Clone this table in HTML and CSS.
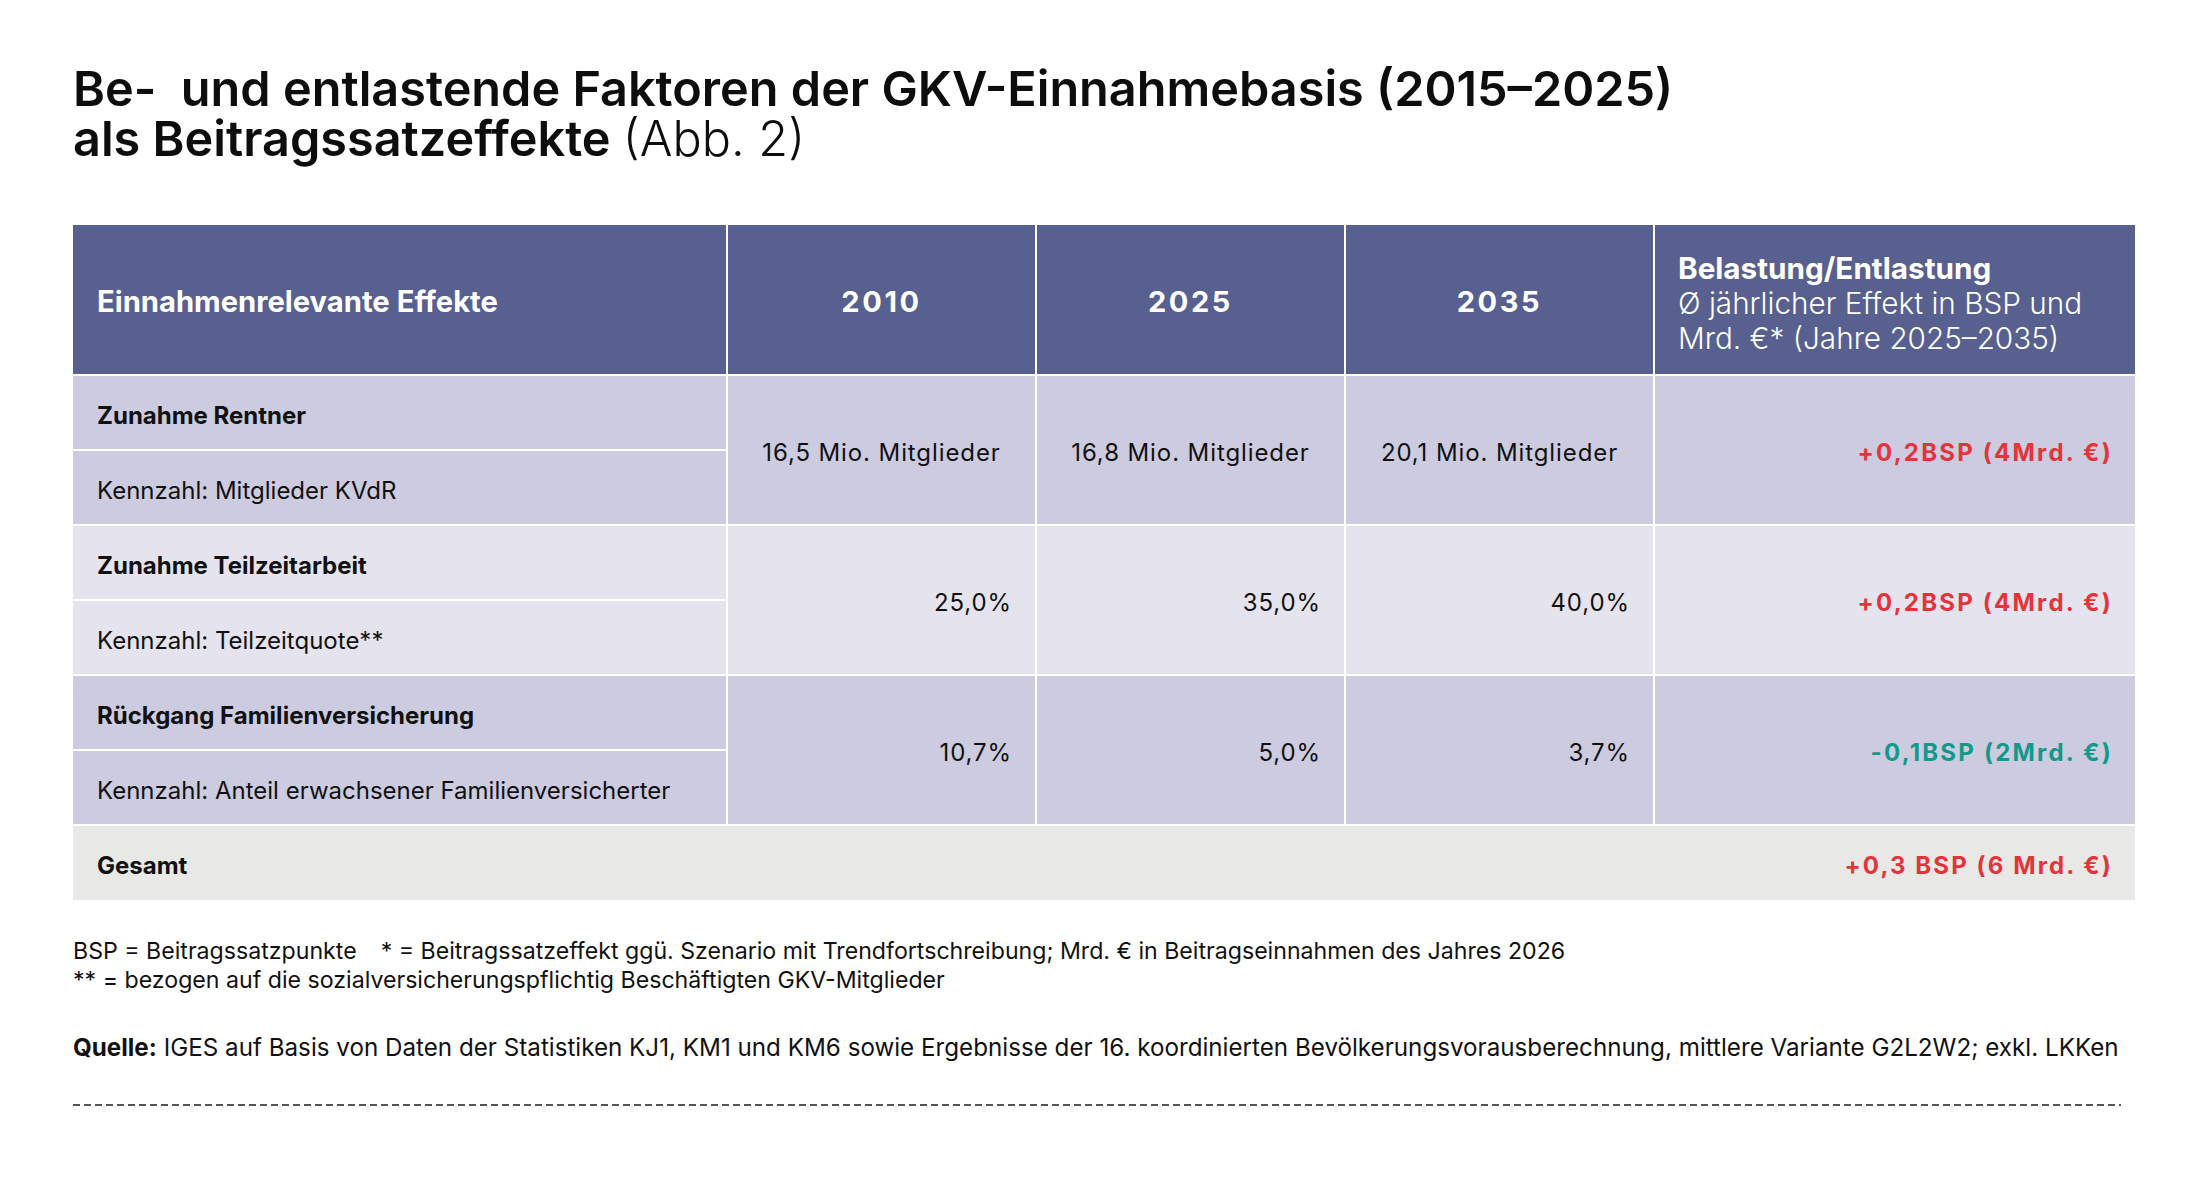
FILE: index.html
```html
<!DOCTYPE html>
<html lang="de">
<head>
<meta charset="utf-8">
<title>Be- und entlastende Faktoren der GKV-Einnahmebasis</title>
<link rel="stylesheet" href="styles.css">
</head>
<body>
<main class="page">
  <h1 class="title">Be-&nbsp; und entlastende Faktoren der GKV-Einnahmebasis (2015–2025)<br>als Beitragssatzeffekte <span class="title-light">(Abb. 2)</span></h1>

  <div class="grid">
    <div class="hd hd-left">Einnahmenrelevante Effekte</div>
    <div class="hd hd-year">2010</div>
    <div class="hd hd-year">2025</div>
    <div class="hd hd-year">2035</div>
    <div class="hd hd-right"><strong>Belastung/Entlastung</strong><span>Ø jährlicher Effekt in BSP und</span><span>Mrd. €* (Jahre 2025–2035)</span></div>

    <div class="cell lbl dark bold">Zunahme Rentner</div>
    <div class="cell val dark center span2">16,5 Mio. Mitglieder</div>
    <div class="cell val dark center span2">16,8 Mio. Mitglieder</div>
    <div class="cell val dark center span2">20,1 Mio. Mitglieder</div>
    <div class="cell eff dark span2 red">+0,2BSP (4Mrd. €)</div>
    <div class="cell lbl dark">Kennzahl: Mitglieder KVdR</div>

    <div class="cell lbl light bold">Zunahme Teilzeitarbeit</div>
    <div class="cell val light span2">25,0%</div>
    <div class="cell val light span2">35,0%</div>
    <div class="cell val light span2">40,0%</div>
    <div class="cell eff light span2 red">+0,2BSP (4Mrd. €)</div>
    <div class="cell lbl light">Kennzahl: Teilzeitquote**</div>

    <div class="cell lbl dark bold">Rückgang Familienversicherung</div>
    <div class="cell val dark span2">10,7%</div>
    <div class="cell val dark span2">5,0%</div>
    <div class="cell val dark span2">3,7%</div>
    <div class="cell eff dark span2 teal">-0,1BSP (2Mrd. €)</div>
    <div class="cell lbl dark">Kennzahl: Anteil erwachsener Familienversicherter</div>

    <div class="total">
      <span class="bold">Gesamt</span>
      <span class="eff-total red">+0,3 BSP (6 Mrd. €)</span>
    </div>
  </div>

  <div class="notes">
    <p>BSP = Beitragssatzpunkte<span class="sep"></span>* = Beitragssatzeffekt ggü. Szenario mit Trendfortschreibung; Mrd. € in Beitragseinnahmen des Jahres 2026<br>** = bezogen auf die sozialversicherungspflichtig Beschäftigten GKV-Mitglieder</p>
    <p class="source"><strong>Quelle:</strong> IGES auf Basis von Daten der Statistiken KJ1, KM1 und KM6 sowie Ergebnisse der 16. koordinierten Bevölkerungsvorausberechnung, mittlere Variante G2L2W2; exkl. LKKen</p>
  </div>
  <div class="dash"></div>
</main>
</body>
</html>
```
FILE: styles.css
```css
html, body {
  margin: 0;
  padding: 0;
  background: #ffffff;
}

body {
  font-family: "Inter", "Liberation Sans", sans-serif;
  color: #111111;
}

.page {
  padding: 64px 62px 0 73px;
}

.title {
  margin: 0;
  font-size: 48.6px;
  line-height: 50px;
  font-weight: 600;
  color: #0d0d0d;
}

.title-light {
  font-weight: 300;
}

.grid {
  margin-top: 61px;
  width: 2062px;
  display: grid;
  grid-template-columns: 653px 307px 307px 307px 480px;
  grid-template-rows: 149px 73px 73px 73px 73px 73px 73px 74px;
  gap: 2px;
  background: #ffffff;
}

.hd {
  background: #57608f;
  color: #ffffff;
  display: flex;
  align-items: center;
  font-size: 28.5px;
}

.hd-left {
  padding-left: 24px;
  padding-top: 4px;
  font-weight: 700;
  font-size: 29.2px;
}

.hd-year {
  justify-content: center;
  padding-top: 4px;
  font-weight: 700;
  font-size: 29px;
  letter-spacing: 2.6px;
}

.hd-right {
  padding-left: 23px;
  padding-top: 8px;
  line-height: 35px;
  font-size: 29.7px;
  font-weight: 300;
  flex-direction: column;
  align-items: flex-start;
  justify-content: center;
}

.hd-right strong {
  font-weight: 700;
}

.cell {
  display: flex;
  align-items: center;
  font-size: 24px;
}

.dark {
  background: #cccbe0;
}

.light {
  background: #e4e3ee;
}

.lbl {
  padding-left: 24px;
  padding-top: 6px;
}

.bold {
  font-weight: 700;
}

.span2 {
  grid-row: span 2;
}

.val {
  justify-content: flex-end;
  padding-right: 23px;
  padding-top: 4px;
  letter-spacing: 0.9px;
}

.val.center {
  justify-content: center;
  padding-right: 0;
}

.eff {
  justify-content: flex-end;
  padding-right: 22px;
  padding-top: 4px;
  font-weight: 700;
  letter-spacing: 2.2px;
}

.red {
  color: #e4343a;
}

.teal {
  color: #11998a;
}

.total {
  grid-column: 1 / -1;
  background: #e8e8e7;
  display: flex;
  align-items: center;
  justify-content: space-between;
  padding: 4px 22px 0 24px;
  font-size: 24px;
}

.eff-total {
  font-weight: 700;
  letter-spacing: 2.1px;
}

.notes {
  margin-top: 37px;
  font-size: 23.15px;
  line-height: 29px;
  color: #111111;
}

.notes p {
  margin: 0;
}

.sep {
  display: inline-block;
  width: 24px;
}

.notes .source {
  margin-top: 38px;
  font-size: 24.2px;
}

.dash {
  margin-top: 42px;
  width: 2048px;
  height: 2px;
  background: repeating-linear-gradient(90deg, #555555 0 7px, transparent 7px 11px);
}
```
